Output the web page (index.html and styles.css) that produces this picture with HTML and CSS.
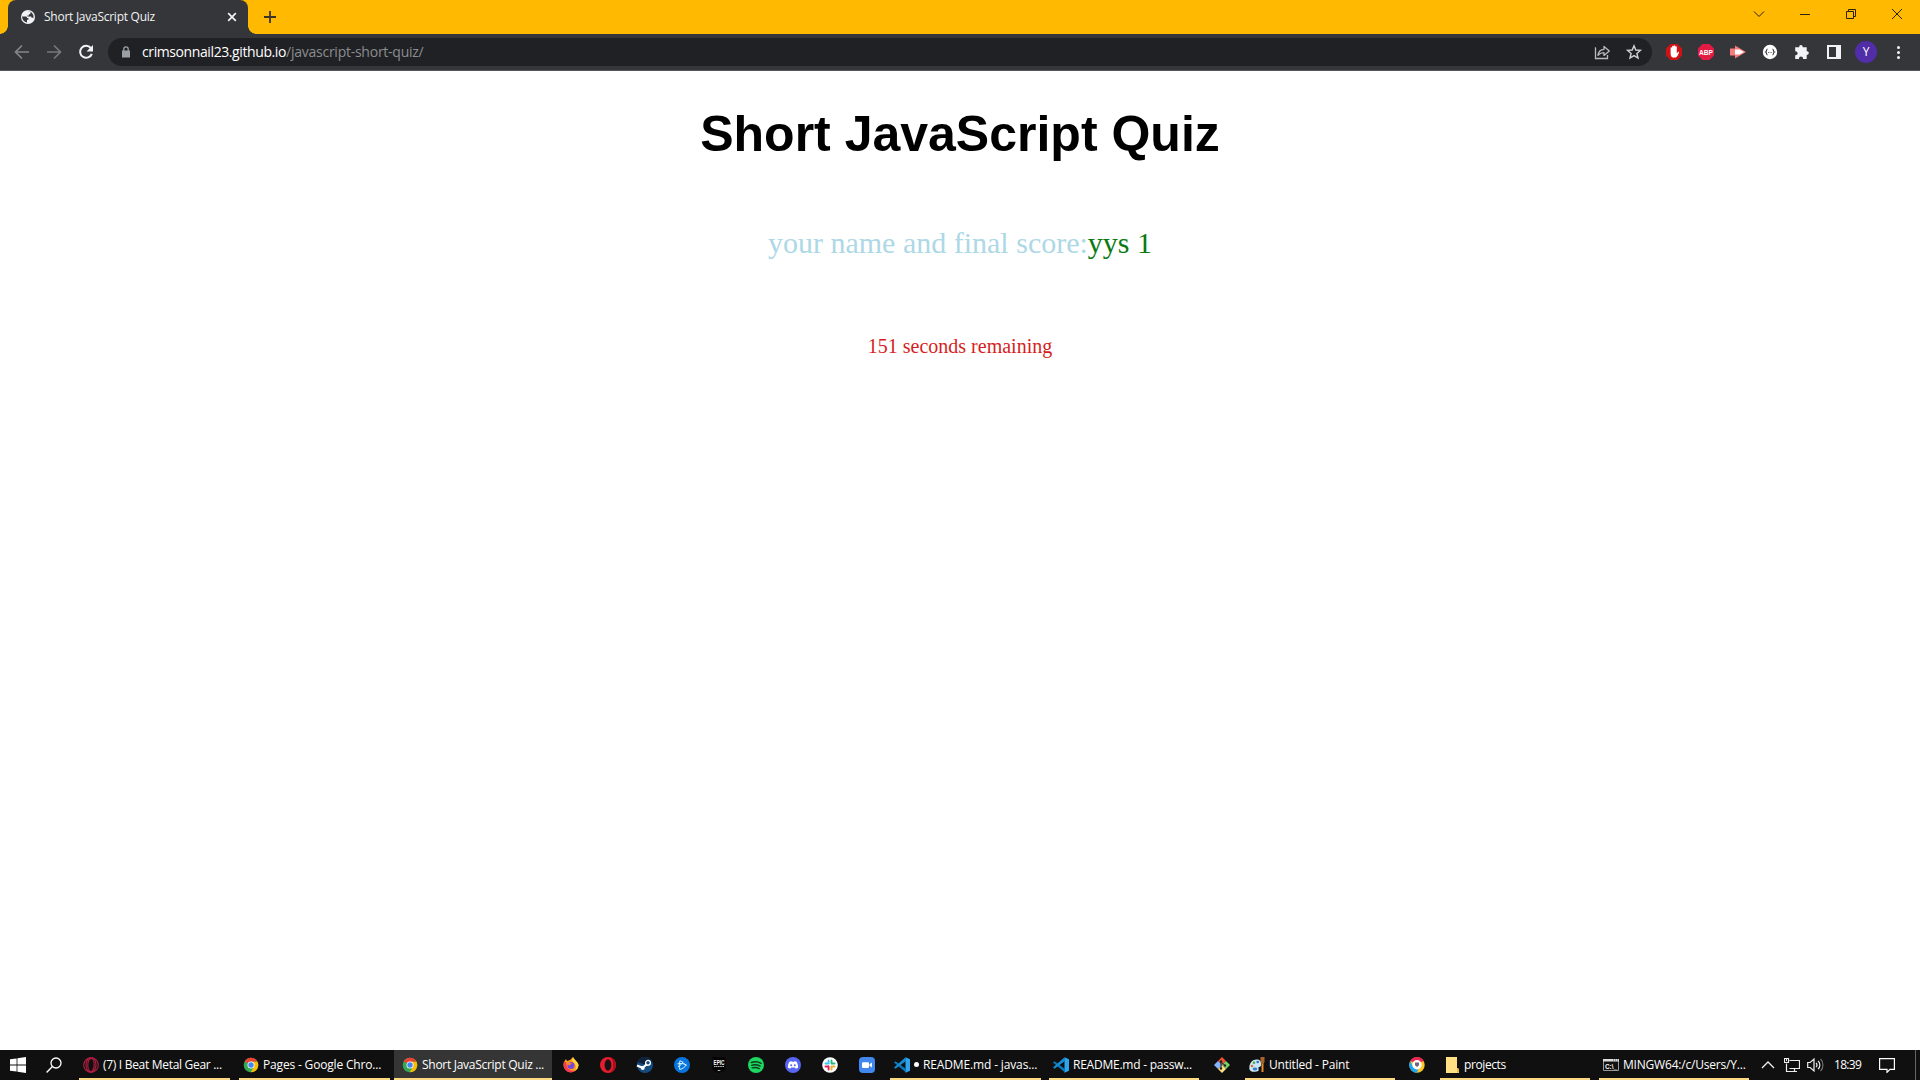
FILE: index.html
```html
<!DOCTYPE html>
<html lang="en">
<head>
<meta charset="utf-8">
<title>Short JavaScript Quiz</title>
<link rel="stylesheet" href="styles.css">
</head>
<body>
<svg class="defs" width="0" height="0" aria-hidden="true">
  <symbol id="chrome" viewBox="0 0 16 16"><circle cx="8" cy="8" r="7.300" fill="#34a853"/><path d="M8 8 1.700 4.300A7.300 7.300 0 0 1 14.500 4.700H8z" fill="#ea4335"/><path d="M8 4.700h6.500A7.300 7.300 0 0 1 7.700 15.300L11 9.700z" fill="#fbbc05"/><circle cx="8" cy="8" r="3.500" fill="#fff"/><circle cx="8" cy="8" r="2.700" fill="#4285f4"/></symbol>
  <symbol id="vscode" viewBox="0 0 16 16"><path d="M11.500.3 16 2.200v11.600l-4.500 1.900z" fill="#2ca5ee"/><path d="m0 5.400 1.500-1.200L12 12v3.400z" fill="#0879bd"/><path d="M0 10.600 11.500.3 12 4 1.500 11.800z" fill="#168bd2"/></symbol>
</svg>

<header class="tabstrip">
  <div class="tab">
    <svg class="favicon" viewBox="0 0 14 14"><circle cx="7" cy="7" r="7" fill="#f1f3f4"/><path d="M1 6.400h3.600c1.100 0 1.400.7 1.400 1.600h1.400v1.800H6v2.700C3 12 1.200 9.500 1 6.400zM6.200 1.600h3.300v1.600c0 .8-.7 1-1.600 1v1.200H6.400v1.200h3.200c.6 0 1 .5 1 1.100h2c0-3-1.200-5-3.200-5.900z" fill="#35363a"/></svg>
    <span class="tab-title">Short JavaScript Quiz</span>
    <svg class="tab-close" viewBox="0 0 10 10"><path d="m1.200 1.200 7.600 7.600m0-7.600L1.200 8.800" stroke="#f1f3f4" stroke-width="1.700"/></svg>
  </div>
  <svg class="new-tab" viewBox="0 0 12 12"><path d="M6 0v12M0 6h12" stroke="#3c3420" stroke-width="1.800"/></svg>
  <div class="window-controls">
    <svg viewBox="0 0 46 28"><path d="m18 11.500 5 5 5-5" class="line"/></svg>
    <svg viewBox="0 0 46 28"><path d="M18 14.500h10" class="line"/></svg>
    <svg viewBox="0 0 46 28"><path d="M18.500 11.500h7v7h-7zM20.500 11.500v-2h7v7h-2" class="line"/></svg>
    <svg viewBox="0 0 46 28"><path d="m18 9 10 10m0-10L18 19" class="line"/></svg>
  </div>
</header>

<nav class="toolbar">
  <svg class="tool" viewBox="0 0 32 32"><path d="M23 16H9.500m6.500-6.500L9.500 16l6.500 6.500" fill="none" stroke="#85868a" stroke-width="1.700"/></svg>
  <svg class="tool" viewBox="0 0 32 32"><path d="M9 16h13.500M16 9.500l6.500 6.500-6.500 6.500" fill="none" stroke="#77787b" stroke-width="1.700"/></svg>
  <svg class="tool" viewBox="0 0 32 32"><path d="M20.800 12A6 6 0 1 0 21.800 17.800" fill="none" stroke="#f1f3f4" stroke-width="2"/><path d="M23 9v6.500h-6.500z" fill="#f1f3f4"/></svg>
  <div class="address">
    <svg class="lock" viewBox="0 0 10 12"><path d="M1 4.500h8v7H1z" fill="#9aa0a6"/><path d="M2.800 5V3a2.200 2.200 0 0 1 4.400 0v2" fill="none" stroke="#9aa0a6" stroke-width="1.300"/></svg>
    <span class="host">crimsonnail23.github.io</span><span class="path">/javascript-short-quiz/</span>
    <svg class="tool share" viewBox="0 0 32 32"><path d="M10 12H9.500v10.500h12V19" fill="none" stroke="#b8bbbe" stroke-width="1.300"/><path d="M18 10.500v2.800c-3.500.2-5.600 2.500-6 6 1.700-2 3.500-2.700 6-2.700v2.800l5.300-4.500z" fill="none" stroke="#b8bbbe" stroke-width="1.300" stroke-linejoin="round"/></svg>
    <svg class="tool" viewBox="0 0 32 32"><path d="m16 9.800 1.800 4.200 4.600.4-3.500 3.100 1.100 4.500-4-2.400-4 2.400 1.100-4.500-3.500-3.100 4.600-.4z" fill="none" stroke="#d0d2d5" stroke-width="1.400"/></svg>
  </div>
  <svg class="tool first-extension" viewBox="0 0 32 32"><path d="M12.600 8h6.800l4.600 4.600v6.800L19.400 24h-6.800L8 19.400v-6.800z" fill="#d01216"/><path d="M12.600 18v-6c0-1 1.500-1 1.500 0v3-4.500c0-1 1.600-1 1.600 0V15v-5c0-1 1.600-1 1.600 0v5-4c0-1 1.500-1 1.500 0v6.500l1-1.300c.8-.8 1.500-.2 1.200.4-1 2.300-1.800 4.600-3.200 5h-3.200c-1.200-.5-1.800-2-2-3.600z" fill="#fff"/></svg>
  <svg class="tool" viewBox="0 0 32 32"><path d="M12.600 8h6.800l4.600 4.600v6.800L19.400 24h-6.800L8 19.400v-6.800z" fill="#e51a44"/><text x="16" y="18.800" class="abp" textLength="14" lengthAdjust="spacingAndGlyphs">ABP</text></svg>
  <svg class="tool" viewBox="0 0 32 32"><path d="M8 12.500h5V9.500l11 6.500-11 6.500v-3H8z" fill="#f77c7b"/><path d="M13 13.500h4.500l4.500 2.500-4.500 2.500H13z" fill="#fff"/></svg>
  <svg class="tool" viewBox="0 0 32 32"><circle cx="16" cy="16" r="7.200" fill="#fff"/><path d="M13.500 13c-1.300 0-.5 2.500-1.800 3 1.300.5.500 3 1.800 3m5-6c1.300 0 .5 2.500 1.800 3-1.300.5-.5 3-1.800 3" fill="none" stroke="#35363a" stroke-width="1.100"/><path d="M14 16.500h4" stroke="#777" stroke-dasharray="1 .6"/></svg>
  <svg class="tool" viewBox="0 0 32 32"><path d="M9.200 11.200h4c-.4-2.800 3.800-2.800 3.500 0h4v4c2.800-.5 2.800 4 0 3.600V23H17c.3-3.200-4.300-3.200-4 0H9.200v-3.800c3.200.3 3.200-4.200 0-4z" fill="#f1f3f4"/></svg>
  <svg class="tool" viewBox="0 0 32 32"><path d="M9 9h14v14H9zM11 11v10h7V11z" fill="#f1f3f4" fill-rule="evenodd"/></svg>
  <span class="tool avatar-slot"><span class="avatar">Y</span></span>
  <svg class="tool" viewBox="0 0 32 32"><g fill="#f1f3f4"><circle cx="16.500" cy="11.500" r="1.500"/><circle cx="16.500" cy="16.500" r="1.500"/><circle cx="16.500" cy="21.500" r="1.500"/></g></svg>
</nav>

<main class="quiz">
  <h1 class="quiz-title">Short JavaScript Quiz</h1>
  <p class="score">your name and final score:<span class="result">yys 1</span></p>
  <p class="timer">151 seconds remaining</p>
</main>

<footer class="taskbar">
  <svg class="pinned system" viewBox="0 0 16 16"><path d="m0 2.300 6.600-.9v6.200H0zM7.400 1.300 16 0v7.600H7.400zM0 8.400h6.600v6.200L0 13.700zM7.400 8.400H16V16l-8.600-1.300z" fill="#fff"/></svg>
  <svg class="pinned system" viewBox="0 0 16 16"><circle cx="10" cy="6" r="5" fill="none" stroke="#fff" stroke-width="1.300"/><path d="M6.400 9.600.6 15.400" stroke="#fff" stroke-width="1.400"/></svg>
  <div class="task opera-task">
    <svg viewBox="0 0 16 16"><g fill="none" stroke="#b51f42" stroke-width="1.100"><circle cx="8" cy="8" r="7.300"/><ellipse cx="8" cy="8" rx="5" ry="7.300"/><ellipse cx="8" cy="8" rx="3.200" ry="6.500"/></g></svg>
    <span class="label-opera">(7) I Beat Metal Gear ...</span>
  </div>
  <div class="task pages-task"><svg><use href="#chrome"/></svg><span class="label-pages">Pages - Google Chro...</span></div>
  <div class="task active"><svg><use href="#chrome"/></svg><span class="label-quiz">Short JavaScript Quiz ...</span></div>

  <svg class="pinned" viewBox="0 0 16 16"><path d="M1 5 3 2l1 2 3-1 3-3c1 3 5 5 5.500 8A7.500 7.500 0 1 1 1 5z" fill="#ff9a1f"/><path d="M10 0c1 3 5.500 5 5.500 8A7.500 7.500 0 0 1 12 14c2-4 1-7-3-10z" fill="#ffd43a"/><path d="M.7 9c1 6 7 8.500 12 4.500-4 1-8-.5-9-5L3 5 1 5z" fill="#f83b50"/><circle cx="8" cy="8.500" r="3.500" fill="#7846d8"/><path d="m3 5 3 .5 3 1-3 2z" fill="#ff8a20"/></svg>
  <svg class="pinned" viewBox="0 0 16 16"><circle cx="8" cy="8" r="8" fill="#e51d2e"/><path d="M10 .3A8 8 0 0 1 10 15.700 8 8 0 0 0 13 8 8 8 0 0 0 10 .3z" fill="#a80e19"/><ellipse cx="8" cy="8" rx="3.400" ry="5.800" fill="#171315"/></svg>
  <svg class="pinned" viewBox="0 0 16 16"><circle cx="8" cy="8" r="8" fill="#154c80"/><path d="M.6 5A8 8 0 0 1 15.400 5L9 8z" fill="#10213d"/><path d="m0 8.500 5.500 2.300L9 8l4-1" stroke="#fff" stroke-width="2.200" fill="none"/><circle cx="11" cy="5.800" r="2.400" fill="#154c80" stroke="#fff" stroke-width="1.300"/><circle cx="5.700" cy="11" r="2" fill="#fff"/></svg>
  <svg class="pinned" viewBox="0 0 16 16"><circle cx="8" cy="8" r="8" fill="#0875df"/><g fill="none" stroke="#d2f3ff" stroke-width="1" stroke-linejoin="round"><path d="M5.800 12.500C5 10 5 6.500 6 3.800c2.500 1 4.700 3 5.500 4.900"/><path d="M3.500 6.800c3-.7 6.500-.2 9 1.200-1.500 2-4 3.700-6.700 4.500"/><path d="M4 9.800c2.200-1 4-2.800 5-5.300"/></g></svg>
  <svg class="pinned" viewBox="0 0 16 16"><path d="M1.500 0h13v13L8 16l-6.500-3z" fill="#050505"/><text x="8" y="7.500" class="epic" textLength="11" lengthAdjust="spacingAndGlyphs">EPIC</text><path d="M3 9.500h10" stroke="#bbb" stroke-dasharray="1.400 .4"/><path d="M6 13h4l-2 1z" fill="#eee"/></svg>
  <svg class="pinned" viewBox="0 0 16 16"><circle cx="8" cy="8" r="8" fill="#1ed760"/><path d="M3.300 5.500c3-1 7-.8 9.800.8M3.700 8.300c3-.9 6-.5 8.400.8M4.200 10.900c2.500-.6 5-.4 7 .7" fill="none" stroke="#10381d" stroke-width="1.400" stroke-linecap="round"/></svg>
  <svg class="pinned" viewBox="0 0 16 16"><circle cx="8" cy="8" r="8" fill="#5865f2"/><path d="m4.200 5 2-.9.500.7h2.600l.5-.7 2 .9c1 1.800 1.400 3.800 1.200 5.700l-2.200 1-.8-1.100H6l-.8 1.100-2.200-1C2.800 8.800 3.200 6.800 4.200 5z" fill="#fff"/><circle cx="6.200" cy="8.300" r="1" fill="#5865f2"/><circle cx="9.800" cy="8.300" r="1" fill="#5865f2"/></svg>
  <svg class="pinned" viewBox="0 0 16 16"><circle cx="8" cy="8" r="7.800" fill="#fff"/><g fill="none" stroke-width="1.900" stroke-linecap="round"><path d="M6.600 3.500v3M3.500 6.500h3" stroke="#36c5f0"/><path d="M9.500 3.500v3M9.500 6.500h3" stroke="#2eb67d"/><path d="M9.500 9.500v3M9.500 9.500h3" stroke="#ecb22e"/><path d="M6.600 9.500v3M3.500 9.500h3" stroke="#e01e5a"/></g></svg>
  <svg class="pinned" viewBox="0 0 16 16"><rect width="16" height="16" rx="4" fill="#4287ed"/><rect x="3" y="5.200" width="7" height="5.800" rx="1.200" fill="#fff"/><path d="M10.500 7.300 13 5.500v5l-2.500-1.700z" fill="#fff"/></svg>

  <div class="task code-task"><svg><use href="#vscode"/></svg><span class="dot"></span><span class="label-javas">README.md - javas...</span></div>
  <div class="task password-task"><svg><use href="#vscode"/></svg><span class="label-passw">README.md - passw...</span></div>
  <svg class="pinned git" viewBox="0 0 16 16"><path d="m8 0 4 4-4 4-4-4z" fill="#f05133"/><path d="m4 4 4 4-4 4-4-4z" fill="#83b5ff"/><path d="m12 4 4 4-4 4-4-4z" fill="#79d36a"/><path d="m8 8 4 4-4 4-4-4z" fill="#ffe080"/><path d="M7 4v8M7 5l4 3.500" stroke="#222" stroke-width="1"/><g fill="#222"><circle cx="7" cy="4.500" r="1.200"/><circle cx="7" cy="11.500" r="1.200"/><circle cx="11" cy="8.500" r="1.200"/></g></svg>
  <div class="task paint-task"><svg viewBox="0 0 16 16"><path d="M.5 12.500C-.5 7 3 2.500 7.500 2.500S12.500 5 12 8s-2.500 1-2.500 3 1 3-2 3.500-6 .5-7-2z" fill="#c9e6f6"/><circle cx="5" cy="5.700" r="1.300" fill="#58a746"/><circle cx="8.700" cy="5" r="1.300" fill="#2872c9"/><circle cx="3" cy="9" r="1.300" fill="#e2702e"/><ellipse cx="6" cy="12" rx="2.300" ry="1.400" fill="#377dcc"/><path d="M11.500 0h4v5l-1 2h-2l-1-2z" fill="#a9642b"/><path d="M13.500 7v8" stroke="#e68a2a" stroke-width="2"/></svg><span class="label-paint">Untitled - Paint</span></div>
  <svg class="pinned beta" viewBox="0 0 16 16"><circle cx="8" cy="8" r="7.700" fill="#ffc522"/><path d="M1.300 4A7.700 7.700 0 0 1 14.700 4L8 7z" fill="#ed2456"/><path d="M1.300 4A7.700 7.700 0 0 0 8 15.700L10 10 3.500 9z" fill="#20a4ee"/><circle cx="8" cy="7.700" r="4.700" fill="#fff"/><path d="M6 5.500h4v2.700L8 10 6 8.200z" fill="#6b6872"/></svg>
  <div class="task folder-task"><svg viewBox="0 0 16 16"><path d="M0 0h11v11l2 1v4H0z" fill="#ffe082"/><path d="M11 11v5l2-1v-3z" fill="#e9bd46"/></svg><span class="label-folder">projects</span></div>
  <div class="task terminal-task"><svg viewBox="0 0 16 16"><path d="M.5 2.500h15v11H.5z" fill="#111" stroke="#999"/><path d="M0 2h16v2.500H0z" fill="#ddd"/><path d="M10 3h1m1 0h1m1 0h1" stroke="#555"/><text x="2" y="11.500" class="prompt" textLength="12" lengthAdjust="spacingAndGlyphs">C:\_</text></svg><span class="label-terminal">MINGW64:/c/Users/Y...</span></div>

  <div class="tray">
    <svg class="caret" viewBox="0 0 14 16"><path d="m1 11 6-6 6 6" fill="none" stroke="#eee" stroke-width="1.300"/></svg>
    <svg class="network" viewBox="0 0 16 16"><path d="M5.500 3.500h10v8h-10M10.500 12v2.500M7 14.500h6M2.500 6.500v8H7M.5 1.500h4v4h-4z" fill="none" stroke="#eee" stroke-width="1.200"/><path d="M2 2h1v2H2z" fill="#eee"/></svg>
    <svg class="volume" viewBox="0 0 17 16"><path d="M.7 5.500h2.500L7 2v12l-3.800-3.500H.7z" fill="none" stroke="#eee" stroke-width="1.200"/><path d="M9 6c1.300 1 1.300 3 0 4m2-6c2.500 2 2.500 6 0 8" fill="none" stroke="#eee" stroke-width="1.200"/><path d="M13.500 2c3.300 3 3.300 9 0 12" fill="none" stroke="#777" stroke-width="1.100"/></svg>
    <span class="clock">18:39</span>
    <svg class="notice" viewBox="0 0 16 16"><path d="M.6 1.600h14.800v10.800H11l-3 3v-3H.6z" fill="none" stroke="#fff" stroke-width="1.200"/></svg>
    <span class="desktop-edge"></span>
  </div>
</footer>
</body>
</html>
```
FILE: styles.css
```css
* { box-sizing: border-box; }
body {
  margin: 0;
  height: 1080px;
  display: flex;
  flex-direction: column;
  overflow: hidden;
  background: #fff;
  font-family: "Open Sans", "Noto Sans", sans-serif;
}
svg { display: block; flex: none; }
.defs { position: absolute; }

.tabstrip { display: flex; flex: none; height: 34px; padding-left: 8px; background: #ffb900; }
.tab {
  position: relative;
  display: flex;
  align-items: center;
  width: 240px;
  padding: 0 11px 0 13px;
  border-radius: 8px 8px 0 0;
  background: #35363a;
  color: #f1f3f4;
}
.tab::before, .tab::after { content: ""; position: absolute; bottom: 0; width: 8px; height: 8px; }
.tab::before { left: -8px; background: radial-gradient(circle at 0 0, transparent 7.5px, #35363a 8px); }
.tab::after { right: -8px; background: radial-gradient(circle at 100% 0, transparent 7.5px, #35363a 8px); }
.favicon { width: 14px; height: 14px; }
.tab-title { margin-left: 9px; padding-bottom: 2px; font-size: 12px; letter-spacing: -0.26px; white-space: nowrap; }
.tab-close { width: 10px; height: 10px; margin-left: auto; }
.new-tab { width: 12px; height: 12px; margin: 11px 0 0 16px; }
.window-controls { display: flex; margin-left: auto; }
.window-controls svg { width: 46px; height: 28px; }
.line { fill: none; stroke: #2b210c; stroke-width: 1; }

.toolbar {
  display: flex;
  align-items: center;
  flex: none;
  height: 37px;
  padding: 0 6px;
  border-bottom: 1px solid #56575a;
  background: #35363a;
}
.tool { width: 32px; height: 32px; flex: none; }
.address {
  display: flex;
  align-items: center;
  width: 1544px;
  height: 28px;
  margin-left: 6px;
  padding: 0 2px 0 13px;
  border-radius: 14px;
  background: #202124;
  font-size: 14px;
  white-space: nowrap;
}
.lock { width: 10px; height: 12px; margin-right: 11px; }
.host, .path { padding-bottom: 1px; }
.host { color: #fff; letter-spacing: -0.4px; }
.path { color: #8b8d90; letter-spacing: -0.25px; }
.share { margin-left: auto; }
.first-extension { margin-left: 6px; }
.abp { fill: #fff; font: bold 7.5px "Liberation Sans", sans-serif; text-anchor: middle; }
.avatar-slot { display: flex; align-items: center; justify-content: center; }
.avatar {
  width: 22px;
  height: 22px;
  border-radius: 50%;
  background: #512da8;
  color: #fff;
  font-size: 12px;
  line-height: 22px;
  text-align: center;
}

.quiz { flex: 1; text-align: center; font-family: "Liberation Serif", serif; }
.quiz-title { margin: 34px 0 0; font: bold 50px/58px "Liberation Sans", sans-serif; }
.score { margin: 63px 0 0; color: lightblue; font-size: 30px; line-height: 34px; }
.result { color: #087a10; }
.timer { margin: 75px 0 0; color: #d51e22; font-size: 20px; line-height: 22px; }

.taskbar { display: flex; flex: none; height: 30px; background: #101010; color: #fff; }
.pinned { width: 37px; height: 16px; margin-top: 7px; padding-left: 1px; }
.system { width: 36px; padding-left: 0; }
.task {
  display: flex;
  align-items: center;
  width: 151px;
  padding: 0 0 0 4px;
  border-bottom: 2px solid #fedb83;
  font-size: 12px;
  white-space: nowrap;
}
.task svg { width: 16px; height: 16px; margin: 2px 4px 0 0; }
.opera-task { margin-left: 7px; }
.pages-task { margin: 0 4px 0 9px; }
.active { width: 158px; padding-left: 8px; background: #353535; }
.code-task { margin-left: 5px; }
.password-task { width: 150px; margin-left: 8px; }
.git { margin-left: 4px; }
.paint-task { width: 150px; margin-left: 5px; }
.beta { margin-left: 3px; }
.folder-task { width: 150px; margin-left: 5px; padding-left: 6px; }
.folder-task svg { margin-right: 2px; }
.terminal-task { width: 150px; margin-left: 9px; }
.dot { width: 5px; height: 5px; margin-right: 4px; border-radius: 50%; background: #fff; }
.task span { flex: none; }
.label-opera { letter-spacing: -0.3px; }
.label-pages { letter-spacing: -0.17px; }
.label-quiz { letter-spacing: -0.28px; }
.label-javas { letter-spacing: -0.14px; }
.label-passw { letter-spacing: -0.24px; }
.label-paint { letter-spacing: -0.2px; }
.label-folder { letter-spacing: -0.4px; }
.label-terminal { letter-spacing: -0.2px; }
.epic { fill: #fff; font: bold 7px "Liberation Sans", sans-serif; text-anchor: middle; }
.prompt { fill: #fff; font: bold 7px "Liberation Sans", sans-serif; }
.tray { display: flex; align-items: center; flex: 1; padding-left: 12px; }
.caret { width: 14px; height: 16px; }
.network { width: 16px; height: 16px; margin-left: 9px; }
.volume { width: 17px; height: 16px; margin-left: 7px; }
.clock { width: 30px; margin-left: 10px; padding-bottom: 1px; font-size: 12px; letter-spacing: -0.7px; }
.notice { width: 16px; height: 16px; margin-left: 15px; }
.desktop-edge { width: 1px; height: 30px; margin: 0 4px 0 auto; background: #666; }
```
